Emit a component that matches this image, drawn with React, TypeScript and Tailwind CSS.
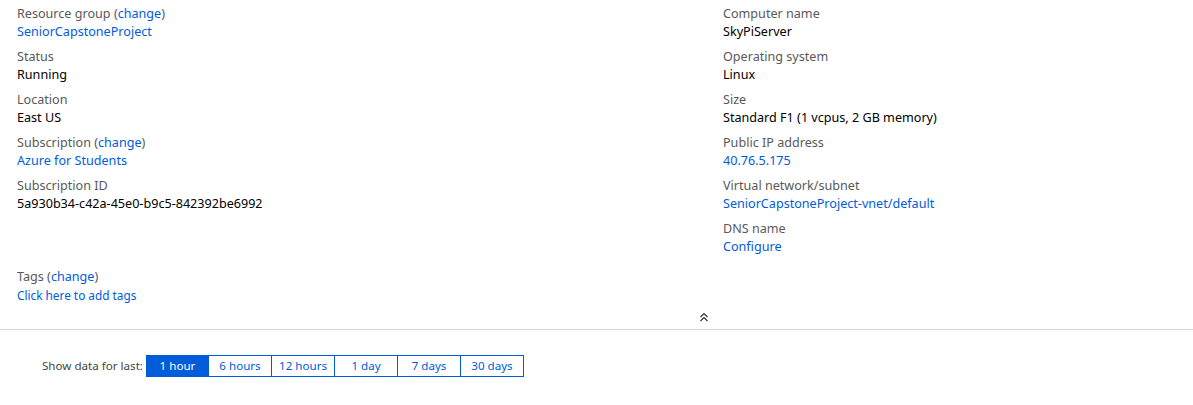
type Item = {
  label: string;
  change?: boolean;
  value: string;
  link?: boolean;
};

const leftItems: Item[] = [
  { label: "Resource group", change: true, value: "SeniorCapstoneProject", link: true },
  { label: "Status", value: "Running" },
  { label: "Location", value: "East US" },
  { label: "Subscription", change: true, value: "Azure for Students", link: true },
  { label: "Subscription ID", value: "5a930b34-c42a-45e0-b9c5-842392be6992" },
];

const rightItems: Item[] = [
  { label: "Computer name", value: "SkyPiServer" },
  { label: "Operating system", value: "Linux" },
  { label: "Size", value: "Standard F1 (1 vcpus, 2 GB memory)" },
  { label: "Public IP address", value: "40.76.5.175", link: true },
  { label: "Virtual network/subnet", value: "SeniorCapstoneProject-vnet/default", link: true },
  { label: "DNS name", value: "Configure", link: true },
];

const ranges = ["1 hour", "6 hours", "12 hours", "1 day", "7 days", "30 days"];

function Field({ item }: { item: Item }) {
  return (
    <div className="mb-[7px]">
      <div className="text-[#595959] leading-[18px]">
        {item.label}
        {item.change && (
          <>
            {" "}(<a className="text-[#015cda] cursor-pointer">change</a>)
          </>
        )}
      </div>
      <div className={`leading-[18px] ${item.link ? "text-[#015cda]" : "text-black"}`}>
        {item.value}
      </div>
    </div>
  );
}

export default function App() {
  return (
    <div
      className="w-[1193px] h-[405px] bg-white text-[12.6px] overflow-hidden"
      style={{ fontFamily: '"Segoe UI", "Noto Sans", sans-serif' }}
    >
      <div className="pl-[17px] pt-[5px]">
        <div className="grid grid-cols-[706px_1fr]">
          <div>
            {leftItems.map((item) => (
              <Field key={item.label} item={item} />
            ))}
          </div>
          <div>
            {rightItems.map((item) => (
              <Field key={item.label} item={item} />
            ))}
          </div>
        </div>
        <div className="mt-[5px]">
          <div className="text-[#595959] leading-[18px]">
            Tags (<a className="text-[#015cda] cursor-pointer">change</a>)
          </div>
          <div className="text-[11.8px] leading-[18px] text-[#015cda]">Click here to add tags</div>
        </div>
      </div>

      <div className="flex justify-center h-[25px] items-center pl-[214px]">
        <svg width="10" height="10" viewBox="0 0 10 10" fill="none" stroke="#333" strokeWidth="1.2">
          <path d="M1.5 5 L5 1.5 L8.5 5" />
          <path d="M1.5 9 L5 5.5 L8.5 9" />
        </svg>
      </div>
      <div className="h-px bg-[#d6d6d6]" />

      <div className="flex items-center pl-[42px] pt-[25px]">
        <span className="w-[104px] text-[11.6px] text-[#444]">Show data for last:</span>
        <div className="flex">
          {ranges.map((r, i) => (
            <button
              key={r}
              className={`w-[63px] h-[22px] text-[11.6px] border border-[#015cda] ${
                i > 0 ? "border-l-0" : ""
              } ${i === 0 ? "bg-[#015cda] text-white" : "bg-white text-[#015cda]"}`}
            >
              {r}
            </button>
          ))}
        </div>
      </div>
    </div>
  );
}
